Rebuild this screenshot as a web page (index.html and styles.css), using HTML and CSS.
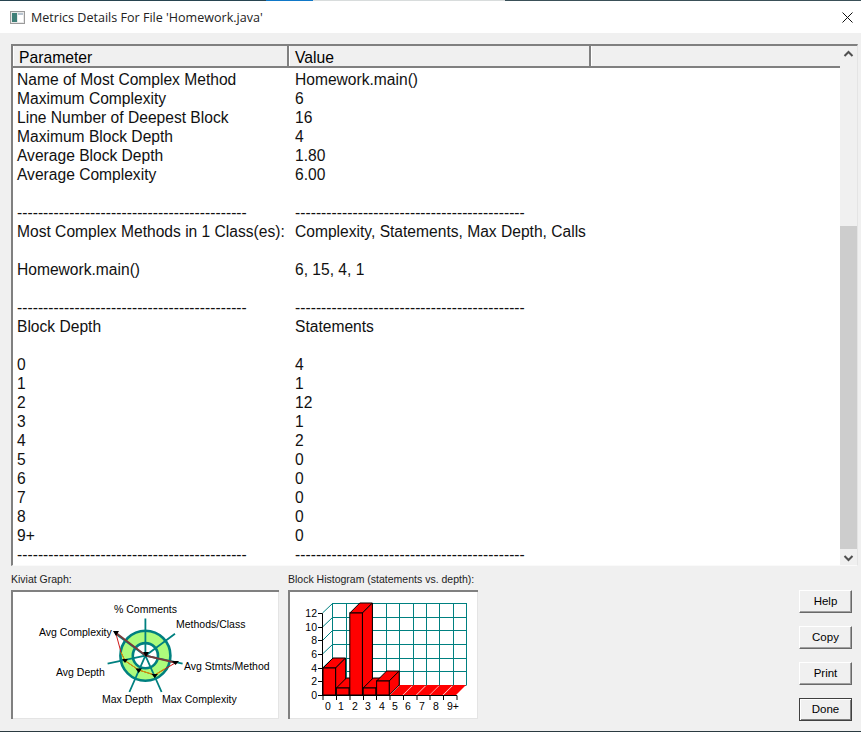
FILE: index.html
```html
<!DOCTYPE html>
<html lang="en">
<head>
<meta charset="utf-8">
<title>Metrics Details For File 'Homework.java'</title>
<link rel="stylesheet" href="styles.css">
</head>
<body>
<div class="window">
  <div class="topstrip"><span class="seg-dark"></span><span class="seg-blue"></span><span class="seg-light"></span><span class="seg-rest"></span></div>
  <header class="titlebar">
    <svg class="appicon" width="15" height="13" viewBox="0 0 15 13"><rect x="0.5" y="0.5" width="14" height="12" fill="#e8e8e8" stroke="#9a9a9a"/><rect x="2" y="2" width="5" height="9" fill="#3f7f78"/><rect x="8" y="2" width="5" height="9" fill="#fff"/><rect x="8" y="2" width="5" height="2" fill="#b8c4d0"/></svg>
    <span class="title">Metrics Details For File 'Homework.java'</span>
    <svg class="close" width="11" height="11" viewBox="0 0 11 11"><path d="M0.5 0.5L10.5 10.5M10.5 0.5L0.5 10.5" stroke="#111" stroke-width="1" fill="none"/></svg>
  </header>
  <main class="content">
    <section class="list">
      <div class="list-main">
        <div class="head">
          <div class="hcell hc1">Parameter</div>
          <div class="hcell hc2">Value</div>
          <div class="hcell hc3"></div>
        </div>
        <div class="rows">
          <div class="row"><span>Name of Most Complex Method</span><span>Homework.main()</span></div>
          <div class="row"><span>Maximum Complexity</span><span>6</span></div>
          <div class="row"><span>Line Number of Deepest Block</span><span>16</span></div>
          <div class="row"><span>Maximum Block Depth</span><span>4</span></div>
          <div class="row"><span>Average Block Depth</span><span>1.80</span></div>
          <div class="row"><span>Average Complexity</span><span>6.00</span></div>
          <div class="row"></div>
          <div class="row dash"><span>--------------------------------------------</span><span>--------------------------------------------</span></div>
          <div class="row"><span>Most Complex Methods in 1 Class(es):</span><span>Complexity, Statements, Max Depth, Calls</span></div>
          <div class="row"></div>
          <div class="row"><span>Homework.main()</span><span>6, 15, 4, 1</span></div>
          <div class="row"></div>
          <div class="row dash"><span>--------------------------------------------</span><span>--------------------------------------------</span></div>
          <div class="row"><span>Block Depth</span><span>Statements</span></div>
          <div class="row"></div>
          <div class="row"><span>0</span><span>4</span></div>
          <div class="row"><span>1</span><span>1</span></div>
          <div class="row"><span>2</span><span>12</span></div>
          <div class="row"><span>3</span><span>1</span></div>
          <div class="row"><span>4</span><span>2</span></div>
          <div class="row"><span>5</span><span>0</span></div>
          <div class="row"><span>6</span><span>0</span></div>
          <div class="row"><span>7</span><span>0</span></div>
          <div class="row"><span>8</span><span>0</span></div>
          <div class="row"><span>9+</span><span>0</span></div>
          <div class="row dash"><span>--------------------------------------------</span><span>--------------------------------------------</span></div>
        </div>
      </div>
      <div class="scrollbar">
        <svg class="arrow" width="17" height="17" viewBox="0 0 17 17"><path d="M4.5 10L8.5 6L12.5 10" stroke="#505050" stroke-width="2" fill="none"/></svg>
        <div class="track"><div class="thumb"></div></div>
        <svg class="arrow" width="17" height="17" viewBox="0 0 17 17"><path d="M4.5 7L8.5 11L12.5 7" stroke="#505050" stroke-width="2" fill="none"/></svg>
      </div>
    </section>
    <section class="bottom">
      <div class="panel kiviat">
        <div class="caption">Kiviat Graph:</div>
        <div class="frame">
          <svg width="268" height="129" viewBox="0 0 268 129">
            <circle cx="134.4" cy="65.7" r="19" fill="none" stroke="#adfb7c" stroke-width="12.6"/>
            <g fill="none" stroke="#008080" stroke-width="2.6">
              <circle cx="134.4" cy="65.7" r="25"/>
              <circle cx="134.4" cy="65.7" r="12.6"/>
            </g>
            <path d="M134.4 65.7V28.5M134.4 65.7L164 43.7M134.4 65.7L171.6 73.7M134.4 65.7L150.6 102M134.4 65.7L118.4 102M134.4 65.7L96.6 73.7M134.4 65.7L104.7 43.7" fill="none" stroke="#008080" stroke-width="1.8"/>
            <path d="M104.7 42.7L110 62.3L114 70.7L127.7 80L143.7 85L164.7 72.7" fill="none" stroke="#d01818" stroke-width="1"/>
            <path d="M110 62.3L114 70.7L127.7 80L143.7 85L153 79" fill="none" stroke="#c8a000" stroke-width="1"/>
            <path d="M104.7 42.7L135 65.7L164.7 72.7" fill="none" stroke="#7b3a3a" stroke-width="2"/>
            <path d="M102 41H108L105 46ZM132 62H138L135 67ZM161 71H168L164.5 75ZM140.5 84H147L143.7 88ZM124.5 78.5H131L127.7 83ZM111 69H117L114 73Z" fill="#000"/>
            <text class="klabel" x="103" y="23">% Comments</text>
            <text class="klabel" x="165" y="38">Methods/Class</text>
            <text class="klabel" x="28" y="46">Avg Complexity</text>
            <text class="klabel" x="173" y="80">Avg Stmts/Method</text>
            <text class="klabel" x="45" y="86">Avg Depth</text>
            <text class="klabel" x="91" y="113">Max Depth</text>
            <text class="klabel" x="151" y="113">Max Complexity</text>
          </svg>
        </div>
      </div>
      <div class="panel histogram">
        <div class="caption">Block Histogram (statements vs. depth):</div>
        <div class="frame">
          <svg width="190" height="129" viewBox="0 0 190 129">
            <g fill="none" stroke="#008080" stroke-width="1">
              <path d="M44.5 13.5H178.5M44.5 27.5H178.5M44.5 40.5H178.5M44.5 54.5H178.5M44.5 68.5H178.5M44.5 81.5H178.5M44.5 95.5H178.5"/>
              <path d="M44.5 13V95M58.5 13V95M71.5 13V95M84.5 13V95M98.5 13V95M111.5 13V95M125.5 13V95M138.5 13V95M151.5 13V95M165.5 13V95M178.5 13V95"/>
              <path d="M34.5 23L44.5 13.5M34.5 37L44.5 27.5M34.5 50.5L44.5 40.5M34.5 64L44.5 54.5M34.5 78L44.5 68.5M34.5 91.5L44.5 81.5"/>
            </g>
            <path d="M30 23.5H34.5V105.5M30 37.5H34.5M30 50.5H34.5M30 64.5H34.5M30 78.5H34.5M30 91.5H34.5M30 105.5H169M35 105.5V110M48.5 105.5V110M62 105.5V110M75.5 105.5V110M88.5 105.5V110M102 105.5V110M115.5 105.5V110M129 105.5V110M142 105.5V110M155.5 105.5V110M169 105.5V110" fill="none" stroke="#000"/>
            <g fill="#ff0000" stroke="#000" stroke-width="1" stroke-linejoin="miter">
              <path d="M155.5 105L165.5 95H178L168 105Z" stroke="none"/>
              <path d="M142 105L152 95H164.6L154.6 105Z" stroke="none"/>
              <path d="M128.8 105L138.8 95H151.4L141.4 105Z" stroke="none"/>
              <path d="M115.4 105L125.4 95H138L128 105Z" stroke="none"/>
              <path d="M102 105L112 95H124.6L114.6 105Z" stroke="none"/>
              <path d="M35 78L45 68H57.6L47.6 78Z"/><path d="M47.6 78L57.6 68V95L47.6 105Z"/><rect x="35" y="78" width="12.6" height="27"/>
              <path d="M48.4 98L58.4 88H71L61 98Z"/><path d="M61 98L71 88V95L61 105Z"/><rect x="48.4" y="98" width="12.6" height="7"/>
              <path d="M61.8 23L71.8 13H84.4L74.4 23Z"/><path d="M74.4 23L84.4 13V95L74.4 105Z"/><rect x="61.8" y="23" width="12.6" height="82"/>
              <path d="M75.2 98L85.2 88H97.8L87.8 98Z"/><path d="M87.8 98L97.8 88V95L87.8 105Z"/><rect x="75.2" y="98" width="12.6" height="7"/>
              <path d="M88.6 91L98.6 81H111.2L101.2 91Z"/><path d="M101.2 91L111.2 81V95L101.2 105Z"/><rect x="88.6" y="91" width="12.6" height="14"/>
            </g>
            <text class="hy" x="29" y="27">12</text>
            <text class="hy" x="29" y="41">10</text>
            <text class="hy" x="29" y="54">8</text>
            <text class="hy" x="29" y="68">6</text>
            <text class="hy" x="29" y="82">4</text>
            <text class="hy" x="29" y="95">2</text>
            <text class="hy" x="29" y="109">0</text>
            <text class="hx" x="40" y="120">0</text>
            <text class="hx" x="53" y="120">1</text>
            <text class="hx" x="67" y="120">2</text>
            <text class="hx" x="80" y="120">3</text>
            <text class="hx" x="94" y="120">4</text>
            <text class="hx" x="107" y="120">5</text>
            <text class="hx" x="120" y="120">6</text>
            <text class="hx" x="134" y="120">7</text>
            <text class="hx" x="148" y="120">8</text>
            <text class="hx" x="165" y="120">9+</text>
          </svg>
        </div>
      </div>
      <div class="buttons">
        <button class="btn" type="button">Help</button>
        <button class="btn" type="button">Copy</button>
        <button class="btn" type="button">Print</button>
        <button class="btn btn-default" type="button">Done</button>
      </div>
    </section>
  </main>
  <div class="bottomstrip"></div>
</div>
</body>
</html>
```

FILE: styles.css
```css
* { box-sizing: border-box; }
html, body { margin: 0; padding: 0; }
body {
  width: 861px;
  height: 732px;
  overflow: hidden;
  background: #f0f0f0;
  font-family: "Liberation Sans", Arial, sans-serif;
  color: #000;
}
.window { display: flex; flex-direction: column; height: 732px; }
.topstrip { display: flex; height: 1px; flex: none; }
.seg-dark { width: 266px; background: #274450; }
.seg-blue { width: 47px; background: #0f78c8; }
.seg-light { width: 192px; background: #d8dcdc; }
.seg-rest { flex: 1; background: #3a5058; }
.titlebar {
  flex: none;
  height: 32px;
  background: #fff;
  display: flex;
  align-items: center;
  padding: 0 8px 0 10px;
}
.appicon { flex: none; margin-right: 6px; }
.title { font-family: "Open Sans", sans-serif; font-size: 12.55px; color: #222; flex: 1; }
.close { flex: none; }
.content { flex: 1; display: flex; flex-direction: column; padding: 11px 3px 12px 11px; min-height: 0; }
.list {
  height: 522px;
  flex: none;
  display: flex;
  background: #fff;
  border-top: 2px solid #808080;
  border-left: 2px solid #808080;
  border-right: 1px solid #e4e4e4;
  border-bottom: 1px solid #fafafa;
  overflow: hidden;
}
.list-main { flex: 1; min-width: 0; display: flex; flex-direction: column; }
.head { display: flex; height: 22px; flex: none; background: #f0f0f0; border-bottom: 2px solid #808080; }
.hcell {
  font-size: 15.7px;
  line-height: 23px;
  padding-left: 5px;
  border-right: 2px solid #808080;
  border-left: 1px solid #fff;
}
.hc1 { width: 276px; }
.hc2 { width: 302px; }
.hc3 { flex: 1; border-right: 0; }
.rows { padding-top: 2px; }
.row { display: flex; height: 19px; font-size: 15.6px; line-height: 19px; padding-left: 4px; white-space: nowrap; color: #111; }
.row span:first-child { width: 278px; flex: none; }
.dash { letter-spacing: 0.03px; }
.scrollbar { width: 17px; flex: none; display: flex; flex-direction: column; background: #f0f0f0; }
.arrow { flex: none; display: block; }
.track { flex: 1; padding-top: 163px; }
.thumb { height: 323px; background: #cdcdcd; }
.bottom { flex: 1; display: flex; padding-top: 5px; }
.caption { font-size: 10.5px; line-height: 13px; height: 19px; padding-top: 2px; white-space: nowrap; color: #222; }
.panel { flex: none; }
.kiviat { width: 268px; margin-right: 9px; }
.histogram { width: 190px; }
.frame {
  height: 129px;
  background: #fff;
  box-shadow: inset 2px 2px 0 #808080, inset -1px -1px 0 #e4e4e4;
}
.frame svg { display: block; }
.klabel { font-family: "Liberation Sans", Arial, sans-serif; font-size: 10.5px; fill: #000; }
.hy { font-family: "Liberation Sans", Arial, sans-serif; font-size: 10.5px; text-anchor: end; }
.hx { font-family: "Liberation Sans", Arial, sans-serif; font-size: 10.5px; text-anchor: middle; }
.buttons {
  margin-left: auto;
  margin-right: 6px;
  padding-top: 19px;
  display: flex;
  flex-direction: column;
  gap: 13.5px;
}
.btn {
  width: 53px;
  height: 22.5px;
  padding: 0;
  font-family: "Liberation Sans", Arial, sans-serif;
  font-size: 11.5px;
  color: #000;
  background: #f0f0f0;
  border: 1px solid;
  border-color: #fff #696969 #696969 #fff;
  box-shadow: inset -1px -1px 0 #a0a0a0;
  border-radius: 0;
}
.btn-default { border: 1px solid #404040; box-shadow: inset 1px 1px 0 #fff, inset -1px -1px 0 #808080; }
.bottomstrip { height: 1px; flex: none; background: #2a3a40; }
```
